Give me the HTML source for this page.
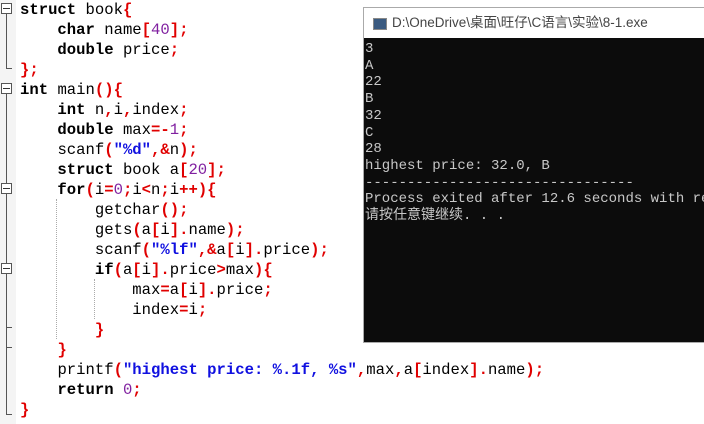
<!DOCTYPE html><html><head><meta charset="utf-8"><style>
body{margin:0;width:704px;height:424px;overflow:hidden;background:#fff;position:relative;font-family:"Liberation Mono",monospace}
.gut{position:absolute;left:0;top:0;width:16px;height:424px;background:#f4f4f4}
.code{position:absolute;left:20px;top:0;font-size:15.6px;line-height:20px;white-space:pre;color:#000;font-weight:bold}
.n{font-weight:normal}.r{color:#e00000}.p{color:#8020a0;font-weight:normal}.s{color:#1010e0}
.box{position:absolute;left:1px;width:9px;height:9px;border:1px solid #555;background:#fff}
.box:after{content:"";position:absolute;left:1px;right:1px;top:4px;height:1px;background:#333}
.vl{position:absolute;left:6px;width:1px;background:#555}
.hl{position:absolute;left:6px;width:6px;height:1px;background:#555}
.dot{position:absolute;border-left:1px dotted #aaa}
.con{position:absolute;left:363px;top:7px;width:341px;height:334px;border:1px solid #aaa;border-right:none;background:#0c0c0c;overflow:hidden}
.tb{height:30px;background:#fff;font-family:"Liberation Sans","Noto Sans CJK SC",sans-serif;font-size:13.5px;color:#444;line-height:30px;padding-left:28px;position:relative;white-space:nowrap}
.ic{position:absolute;left:9px;top:10px;width:12px;height:10px;background:#3a5a80;border:1px solid #888}
.out{font-family:"Liberation Mono","Noto Sans CJK SC",monospace;font-size:14px;line-height:16.7px;color:#c8c8c8;white-space:pre;padding-left:1px;margin-top:3px}
</style></head><body>
<div class="gut"></div>
<div class="box" style="top:3px"></div><div class="vl" style="top:14px;height:54px"></div><div class="hl" style="top:68px"></div>
<div class="box" style="top:83px"></div><div class="vl" style="top:94px;height:320px"></div><div class="hl" style="top:414px"></div>
<div class="box" style="top:183px"></div>
<div class="box" style="top:263px"></div>
<div class="hl" style="top:327px"></div><div class="hl" style="top:347px"></div>
<div class="dot" style="left:56px;top:199px;height:140px"></div>
<div class="dot" style="left:94px;top:279px;height:40px"></div>
<div class="code">struct <span class="n">book</span><span class="r">{</span>
    char <span class="n">name</span><span class="r">[</span><span class="p">40</span><span class="r">];</span>
    double <span class="n">price</span><span class="r">;</span>
<span class="r">};</span>
int <span class="n">main</span><span class="r">(){</span>
    int <span class="n">n</span><span class="r">,</span><span class="n">i</span><span class="r">,</span><span class="n">index</span><span class="r">;</span>
    double <span class="n">max</span><span class="r">=-</span><span class="p">1</span><span class="r">;</span>
    <span class="n">scanf</span><span class="r">(</span><span class="s">"%d"</span><span class="r">,&amp;</span><span class="n">n</span><span class="r">);</span>
    struct <span class="n">book a</span><span class="r">[</span><span class="p">20</span><span class="r">];</span>
    for<span class="r">(</span><span class="n">i</span><span class="r">=</span><span class="p">0</span><span class="r">;</span><span class="n">i</span><span class="r">&lt;</span><span class="n">n</span><span class="r">;</span><span class="n">i</span><span class="r">++){</span>
        <span class="n">getchar</span><span class="r">();</span>
        <span class="n">gets</span><span class="r">(</span><span class="n">a</span><span class="r">[</span><span class="n">i</span><span class="r">].</span><span class="n">name</span><span class="r">);</span>
        <span class="n">scanf</span><span class="r">(</span><span class="s">"%lf"</span><span class="r">,&amp;</span><span class="n">a</span><span class="r">[</span><span class="n">i</span><span class="r">].</span><span class="n">price</span><span class="r">);</span>
        if<span class="r">(</span><span class="n">a</span><span class="r">[</span><span class="n">i</span><span class="r">].</span><span class="n">price</span><span class="r">&gt;</span><span class="n">max</span><span class="r">){</span>
            <span class="n">max</span><span class="r">=</span><span class="n">a</span><span class="r">[</span><span class="n">i</span><span class="r">].</span><span class="n">price</span><span class="r">;</span>
            <span class="n">index</span><span class="r">=</span><span class="n">i</span><span class="r">;</span>
        <span class="r">}</span>
    <span class="r">}</span>
    <span class="n">printf</span><span class="r">(</span><span class="s">"highest price: %.1f, %s"</span><span class="r">,</span><span class="n">max</span><span class="r">,</span><span class="n">a</span><span class="r">[</span><span class="n">index</span><span class="r">].</span><span class="n">name</span><span class="r">);</span>
    return <span class="p">0</span><span class="r">;</span>
<span class="r">}</span></div>
<div class="con"><div class="tb"><div class="ic"></div>D:\OneDrive\桌面\旺仔\C语言\实验\8-1.exe</div>
<div class="out">3
A
22
B
32
C
28
highest price: 32.0, B
--------------------------------
Process exited after 12.6 seconds with re
请按任意键继续. . .</div></div>
</body></html>
